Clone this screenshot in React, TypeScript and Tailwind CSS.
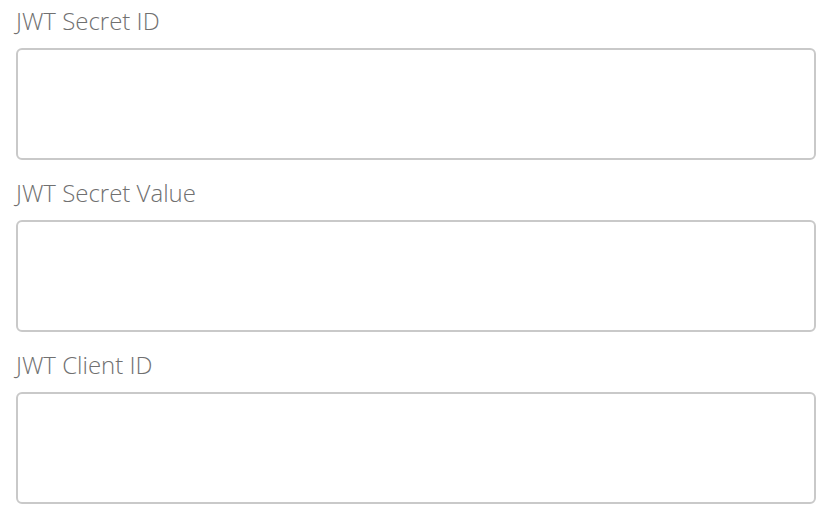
export default function App() {
  const fields = ['JWT Secret ID', 'JWT Secret Value', 'JWT Client ID']

  return (
    <div className="min-h-screen bg-white pl-4 pr-[18px] pt-[2px]" style={{ fontFamily: '"Open Sans", sans-serif' }}>
      {fields.map((label) => (
        <div key={label} className="mb-[14px]">
          <label className="block text-[24px] font-light leading-[38px] text-[#707070]">{label}</label>
          <div className="mt-2 h-[112px] w-full rounded-md border-2 border-[#c9c9c9] bg-white" />
        </div>
      ))}
    </div>
  )
}
